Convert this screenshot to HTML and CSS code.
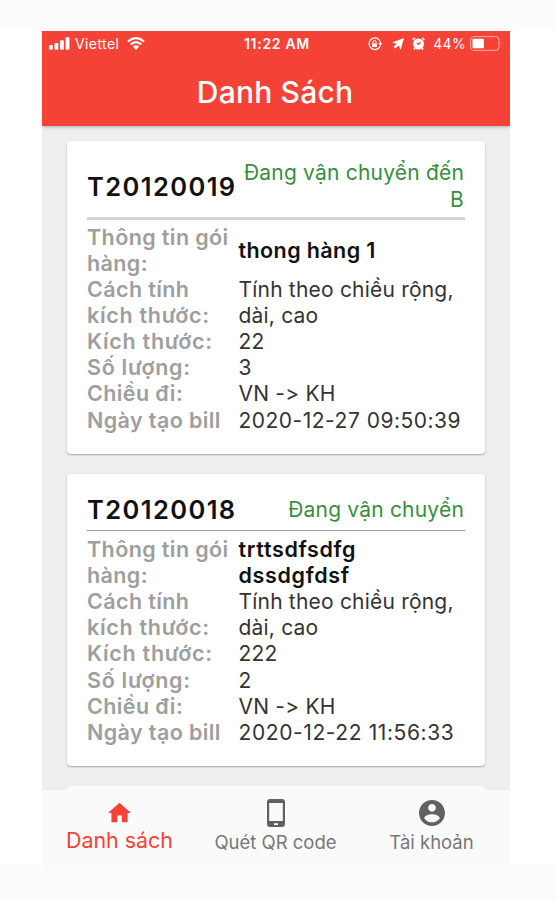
FILE: index.html
```html
<!DOCTYPE html>
<html lang="vi">
<head>
<meta charset="utf-8">
<title>Danh Sách</title>
<link rel="stylesheet" href="styles.css">
</head>
<body>
<div class="stage">
<main class="phone">
  <header class="header">
    <div class="status">
      <div class="carrier">
        <svg class="signal" viewBox="0 0 22 13"><rect x="0" y="8" width="4" height="5" rx="1"/><rect x="5.8" y="6" width="4" height="7" rx="1"/><rect x="11.6" y="3" width="4" height="10" rx="1"/><rect x="17.4" y="0" width="4" height="13" rx="1"/></svg>
        <span class="operator">Viettel</span>
        <svg class="wifi" viewBox="0 0 18 13"><path d="M1 4.5Q9-2.3 17 4.5M3.8 7.4Q9 3 14.2 7.4" fill="none" stroke="#fff" stroke-width="2.2"/><path d="M5.8 9.6Q9 7 12.2 9.6L9 13z"/></svg>
      </div>
      <span class="clock">11:22 AM</span>
      <div class="indicators">
        <svg class="lock" viewBox="0 0 14 14"><path d="M12.2 9A5.8 5.8 0 1 1 12.6 5.8" fill="none" stroke="#fff" stroke-width="1.2"/><path d="M10.3 6H14.5L12.4 8.8zM4 6.4H9V10H4z"/><path d="M5 6.5V5a1.500 1.500 0 0 1 3 0V6.5" fill="none" stroke="#fff"/></svg>
        <svg class="arrow" viewBox="0 0 12 12"><path d="M12 0L8.600 12L6.800 7.400L3.200 10.500L1.500 8.800L4.800 5.800L0 4.500z"/></svg>
        <svg class="alarm" viewBox="0 0 13 13"><circle cx="6.5" cy="7" r="5.5"/><path d="M.6 3L3 .8M12.4 3L10 .8M3 11L2 12.600M10 11L11 12.600" stroke="#fff" stroke-width="1.5"/><path d="M4.800 6L6.400 7.500L8.600 5.200" fill="none" stroke="#f44336" stroke-width="1.2"/></svg>
        <span class="percent">44%</span>
        <svg class="battery" viewBox="0 0 33 15"><rect x=".6" y=".6" width="28.4" height="13.8" rx="3.5" fill="none" stroke="#fff" stroke-opacity=".55"/><rect x="2.5" y="2.8" width="11.5" height="9.4" rx="1"/><path d="M31 5.3Q32.600 7.500 31 9.700z" opacity=".6"/></svg>
      </div>
    </div>
    <h1 class="title">Danh Sách</h1>
  </header>

  <section class="list">
    <article class="card">
      <div class="card-head head-tall">
        <h2 class="code">T20120019</h2>
        <p class="state">Đang vận chuyển đến<br>B</p>
      </div>
      <dl class="details details-compact">
        <dt>Thông tin gói<br>hàng:</dt><dd class="name">thong hàng 1</dd>
        <dt>Cách tính<br><span class="wide">kích thước:</span></dt><dd>Tính theo chiều rộng,<br>dài, cao</dd>
        <dt class="wide">Kích thước:</dt><dd>22</dd>
        <dt class="wide">Số lượng:</dt><dd>3</dd>
        <dt>Chiều đi:</dt><dd>VN -&gt; KH</dd>
        <dt>Ngày tạo bill</dt><dd class="date">2020-12-27 09:50:39</dd>
      </dl>
    </article>
    <article class="card">
      <div class="card-head">
        <h2 class="code">T20120018</h2>
        <p class="state">Đang vận chuyển</p>
      </div>
      <dl class="details">
        <dt>Thông tin gói<br>hàng:</dt><dd class="name name-wide">trttsdfsdfg<br>dssdgfdsf</dd>
        <dt>Cách tính<br><span class="wide">kích thước:</span></dt><dd>Tính theo chiều rộng,<br>dài, cao</dd>
        <dt class="wide">Kích thước:</dt><dd>222</dd>
        <dt class="wide">Số lượng:</dt><dd>2</dd>
        <dt>Chiều đi:</dt><dd>VN -&gt; KH</dd>
        <dt>Ngày tạo bill</dt><dd class="date date-wide">2020-12-22 11:56:33</dd>
      </dl>
    </article>
    <div class="card next"></div>
  </section>

  <nav class="tabs">
    <a class="tab active">
      <svg class="home" viewBox="2 3 20 17"><path d="M10 20v-6h4v6h5v-8h3L12 3 2 12h3v8z"/></svg>
      <span>Danh sách</span>
    </a>
    <a class="tab">
      <svg class="device" viewBox="0 0 18 28"><path fill-rule="evenodd" d="M3 0H15Q18 0 18 3V25Q18 28 15 28H3Q0 28 0 25V3Q0 0 3 0ZM2.2 4V22H15.8V4ZM7 24.2V26H11V24.2Z"/></svg>
      <span>Quét QR code</span>
    </a>
    <a class="tab">
      <svg class="account" viewBox="2 2 20 20"><path d="M12 2C6.48 2 2 6.48 2 12s4.480 10 10 10 10-4.480 10-10S17.520 2 12 2zm0 3c1.660 0 3 1.340 3 3s-1.340 3-3 3-3-1.340-3-3 1.340-3 3-3zm0 14.200c-2.500 0-4.710-1.280-6-3.220.030-1.990 4-3.080 6-3.080 1.990 0 5.970 1.090 6 3.080-1.290 1.940-3.500 3.220-6 3.220z"/></svg>
      <span>Tài khoản</span>
    </a>
  </nav>
</main>
</div>
</body>
</html>
```
FILE: styles.css
```css
* { box-sizing: border-box; margin: 0; padding: 0; }
body {
  height: 900px;
  padding-top: 30px;
  overflow: hidden;
  background: #fbfbfb;
  font-family: Inter, "Liberation Sans", sans-serif;
  white-space: nowrap;
}
svg { display: block; fill: currentColor; flex: none; }
.stage { height: 835px; background: #fff; padding: 0.5px 47px 0 42px; }
.phone {
  width: 468px;
  height: 834px;
  display: flex;
  flex-direction: column;
  overflow: hidden;
  background: #eee;
}
.header {
  height: 95px;
  flex: none;
  background: #f44336;
  color: #fff;
  box-shadow: 0 1px 4px rgba(0, 0, 0, .25);
  z-index: 1;
}
.status {
  height: 26px;
  padding: 0 7px;
  display: grid;
  grid-template-columns: 1fr auto 1fr;
  align-items: center;
  font-size: 14px;
}
.carrier, .indicators { display: flex; align-items: center; }
.signal { width: 21px; height: 13px; }
.operator { margin-left: 5px; letter-spacing: .4px; }
.wifi { width: 18px; height: 13px; margin-left: 8px; }
.clock { font-weight: 600; font-size: 14px; letter-spacing: .7px; padding-left: 2px; }
.indicators { justify-content: flex-end; }
.lock { width: 14px; height: 14px; }
.arrow { width: 12px; height: 12px; margin-left: 10px; }
.alarm { width: 13px; height: 13px; margin-left: 8px; }
.percent { margin-left: 8px; letter-spacing: .3px; }
.battery { width: 33px; height: 15px; margin-left: 4px; }
.title {
  padding-right: 2px;
  text-align: center;
  font-size: 30px;
  font-weight: 500;
  line-height: 70px;
  letter-spacing: .2px;
}
.list { flex: 1; min-height: 0; padding: 15.5px 25px 0; }
.card {
  margin-bottom: 20px;
  padding: 19px 20px 20px;
  background: #fff;
  border-radius: 4px;
  box-shadow: 0 1px 2px rgba(0, 0, 0, .3);
}
.card-head {
  height: 38px;
  padding: 0 1px 4px 0;
  display: flex;
  align-items: center;
  justify-content: space-between;
  border-bottom: 1px solid #999;
  line-height: 26.2px;
}
.head-tall { height: 60px; border-bottom: 3px solid #d4d4d4; }
.head-tall .code { padding-top: 2px; }
.code { font-size: 25.5px; font-weight: 600; letter-spacing: 1.4px; color: #111; }
.state { font-size: 21px; text-align: right; color: #388e3c; letter-spacing: .2px; }
.details {
  padding: 4.5px 0 .5px;
  display: grid;
  grid-template-columns: 151.5px 1fr;
  align-items: center;
  font-size: 21px;
  line-height: 26.15px;
  letter-spacing: .2px;
  color: #333;
}
.details-compact { padding: 3.5px 0 1.5px; }
.details dt { font-size: 21.5px; font-weight: 600; letter-spacing: .4px; color: #9e9e9e; }
.details dd { padding-top: 1px; margin-bottom: -1px; }
.details .wide { letter-spacing: .7px; }
.details .name { padding: 0; margin: 0; font-size: 21.5px; font-weight: 600; letter-spacing: .4px; color: #111; }
.details .name-wide { letter-spacing: .65px; }
.details .date { letter-spacing: .5px; }
.details .date-wide { letter-spacing: .6px; }
.next { height: 60px; margin: 0; background: #fafafa; box-shadow: none; }
.tabs {
  height: 75px;
  flex: none;
  display: grid;
  grid-template-columns: repeat(3, 1fr);
  background: #fafafa;
  color: #777;
  z-index: 1;
}
.tab { display: flex; flex-direction: column; align-items: center; font-size: 18.5px; line-height: 24px; padding: 9px 1px 0 0; }
.active { color: #f44336; font-size: 21.4px; padding: 12px 1px 0 0; }
.home { width: 23px; height: 21px; margin-bottom: 5px; }
.device { width: 18px; height: 28px; margin-bottom: 3px; color: #616161; }
.account { width: 26px; height: 26px; margin: 1px 0 4px; color: #616161; }
```
